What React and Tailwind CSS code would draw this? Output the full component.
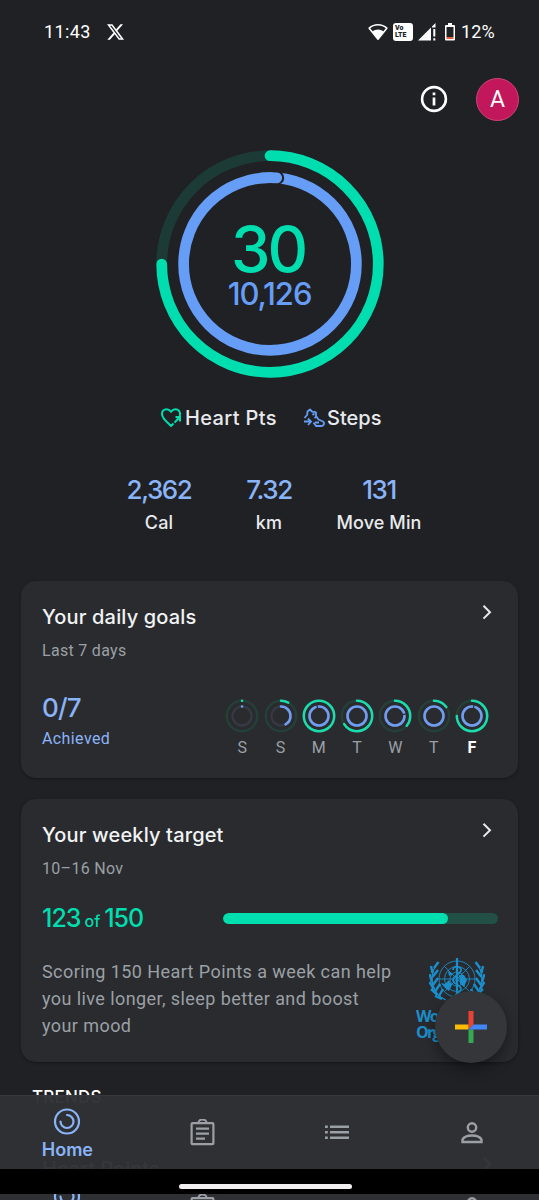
import { FaXTwitter } from "react-icons/fa6";

const days = [
  { label: "S", heart: 0.001, steps: 0.001 },
  { label: "S", heart: 0.08, steps: 0.42 },
  { label: "M", heart: 1, steps: 1, over: 0.97 },
  { label: "T", heart: 0.66, steps: 1 },
  { label: "W", heart: 0.36, steps: 1, over: 0.22 },
  { label: "T", heart: 0.15, steps: 1 },
  { label: "F", heart: 0.75, steps: 1, over: 0.03, today: true },
];

const stats = [
  { value: "2,362", label: "Cal" },
  { value: "7.32", label: "km" },
  { value: "131", label: "Move Min" },
];

function Arc({ c, r, width, value, color }) {
  return (
    <circle
      cx={c}
      cy={c}
      r={r}
      fill="none"
      stroke={color}
      strokeWidth={width}
      strokeLinecap={value < 1 ? "round" : "butt"}
      pathLength="100"
      strokeDasharray={value < 1 ? `${value * 100} 200` : undefined}
      transform={`rotate(-90 ${c} ${c})`}
    />
  );
}

function StatusBar() {
  return (
    <div className="flex h-[63px] items-center pl-11 pr-[44px] text-[18px] text-white">
      <span className="w-[62px] tracking-[0.4px]">11:43</span>
      <FaXTwitter className="h-5 w-[19px]" />
      <div className="ml-auto flex items-center">
        <svg className="h-[18px] w-5" viewBox="0 0 20 18">
          <path d="M1.2 5.2C6 .6 14 .6 18.8 5.2L10 16.2Z" fill="none" stroke="white" strokeWidth="1.6" strokeLinejoin="round" />
          <path d="M4.300 8.600C7.500 5.900 12.500 5.900 15.700 8.600L10 16Z" fill="white" />
        </svg>
        <div className="ml-[5px] flex h-[18px] w-[20px] flex-col justify-center rounded-[3px] bg-white pl-[2px] text-[7px] font-black leading-[7px] text-[#202124]">
          <span>Vo</span>
          <span>LTE</span>
        </div>
        <svg className="ml-[5px] h-[18px] w-[19px]" viewBox="0 0 19 18">
          <path d="M0 17.5L13 4.500V17.500Z M14 3.500L17.500 0V4.500H14Z" fill="white" />
          <path d="M16.300 6V13.500M16.300 15.300V17.500" stroke="white" strokeWidth="2" />
        </svg>
        <svg className="ml-[8px] h-[18px] w-[10px]" viewBox="0 0 10 18">
          <path d="M3 0H7V2H9Q10 2 10 3V16.500Q10 17.500 9 17.500H1Q0 17.500 0 16.500V3Q0 2 1 2H3Z" fill="white" />
          <path d="M1.500 4H8.500V14H1.500Z" fill="#202124" />
          <path d="M1.500 14H8.500V16H1.500Z" fill="#e2603c" />
        </svg>
        <span className="ml-[6px] tracking-[0.2px]">12%</span>
      </div>
    </div>
  );
}

function TopActions() {
  return (
    <div className="mt-px flex h-[70px] items-center justify-end gap-7 pr-5">
      <svg className="h-7 w-7" viewBox="0 0 28 28">
        <circle cx="14" cy="14" r="11.900" fill="none" stroke="white" strokeWidth="2.600" />
        <path d="M14 12.500V20.500M14 7.500V10.200" stroke="white" strokeWidth="2.700" />
      </svg>
      <div className="flex h-[43px] w-[43px] items-center justify-center rounded-full border border-[#d0417a] bg-[#c2185b] pt-0.5 text-[23px] text-white">
        A
      </div>
    </div>
  );
}

function GoalRings() {
  return (
    <div className="relative mx-auto mt-4 h-[228px] w-[228px]">
      <svg className="h-[228px] w-[228px]" viewBox="0 0 228 228">
        <circle cx="114" cy="114" r="108.300" fill="none" stroke="#1c3b37" strokeWidth="10.700" />
        <Arc c={114} r={108.3} width={10.7} value={0.75} color="#00deb0" />
        <Arc c={114} r={86.4} width={10.7} value={1} color="#669df6" />
        <circle cx="121.200" cy="27.900" r="7" fill="#202124" />
        <path d="M106 27.970A86.400 86.400 0 0 1 120.800 27.870" fill="none" stroke="#669df6" strokeWidth="10.700" strokeLinecap="round" />
      </svg>
      <div className="absolute inset-0 flex flex-col items-center pt-[67px]">
        <div className="mr-[3px] text-[63px] font-medium leading-[64px] tracking-[-3px] text-[#00deb0]">30</div>
        <div className="text-[31px] font-medium leading-[26px] tracking-[-1.1px] text-[#669df6]">10,126</div>
      </div>
    </div>
  );
}

function Legend() {
  return (
    <div className="mt-[26px] flex h-7 items-center pl-[161px] text-[20px] font-medium text-[#e8eaed]">
      <svg className="h-5 w-[21px]" viewBox="0 0 21 20" fill="none" stroke="#00deb0" strokeWidth="2">
        <path d="M18.800 8C20 3.500 17 1.200 14.500 1.200C12.500 1.200 11 2.300 10 3.800C9 2.300 7.500 1.200 5.500 1.200C3 1.200 1 3.200 1 6C1 10.500 5.500 13.500 10 18L12.500 15.500" strokeLinejoin="round" />
        <path d="M13.500 14.500L19 9M14.500 9H19V13.500" />
      </svg>
      <span className="ml-[3px] w-[118px] tracking-[0.35px]">Heart Pts</span>
      <svg className="h-5 w-[22px]" viewBox="0 0 22 20" fill="none" stroke="#669df6" strokeWidth="1.800">
        <path d="M1.500 10L4 7C5 5.500 3.500 4.500 5 3L7 1.500L9 3.500C10.500 4.500 12 3 13 4.500V8L15.500 11.500L20 13.500C22 15 21 18 18.500 18H13L10.500 14.500" strokeLinejoin="round" />
        <path d="M1 13.500H7.500M5 10.500L8 13.500L5 17M9.500 7L11.500 5.500M11.500 10L13.500 8.500M12 14.500L16 14.500" />
      </svg>
      <span className="ml-[2px]">Steps</span>
    </div>
  );
}

function Stats() {
  return (
    <div className="ml-[104px] mt-[42px] grid w-[330px] grid-cols-3 text-center">
      {stats.map(s => (
        <div key={s.label}>
          <div className="text-[26px] font-medium leading-8 tracking-[-1.4px] text-[#8ab4f8]">{s.value}</div>
          <div className="mt-[3px] text-[18px] font-medium leading-7 tracking-[0.1px] text-[#e8eaed]">{s.label}</div>
        </div>
      ))}
    </div>
  );
}

function Chevron() {
  return (
    <svg className="mt-px h-4 w-[10px]" viewBox="0 0 10 16" fill="none" stroke="#e8eaed" strokeWidth="2">
      <path d="M1.500 1.800L8 8.200L1.500 14.600" />
    </svg>
  );
}

function Card({ title, subtitle, className, children }) {
  return (
    <section className={`mx-[21px] rounded-[15px] bg-[#2a2b2e] pl-[21px] shadow-[0_1px_3px_rgba(0,0,0,0.35)] ${className}`}>
      <div className="flex justify-between pr-[26px] pt-[22px]">
        <h2 className="text-[20px] font-medium leading-7 tracking-[0.15px] text-[#f1f3f4]">{title}</h2>
        <Chevron />
      </div>
      <p className="mt-2 font-[Roboto] text-[16px] leading-6 tracking-[0.3px] text-[#9aa0a6]">{subtitle}</p>
      {children}
    </section>
  );
}

function DayRings({ heart, steps, over }) {
  return (
    <svg className="h-[34px] w-[34px]" viewBox="0 0 34 34">
      <circle cx="17" cy="17" r="15.200" fill="none" stroke="#244039" strokeWidth="2.400" />
      <circle cx="17" cy="17" r="9.500" fill="none" stroke="#353944" strokeWidth="2.400" />
      <Arc c={17} r={15.2} width={2.5} value={heart} color="#1cdcae" />
      <Arc c={17} r={9.5} width={2.6} value={steps} color="#719df0" />
      {over && (
        <path d="M17 5.800V9.200" stroke="#2a2b2e" strokeWidth="1.200" transform={`rotate(${over * 360} 17 17)`} />
      )}
    </svg>
  );
}

function DailyGoals() {
  return (
    <Card title="Your daily goals" subtitle="Last 7 days" className="mt-[44px] h-[197px]">
      <div className="mt-[29px] flex justify-between pr-[29px]">
        <div>
          <div className="text-[26px] font-medium leading-8 tracking-[-0.8px] text-[#8ab4f8]">0/7</div>
          <div className="mt-[3px] font-[Roboto] text-[16px] leading-6 tracking-[0.4px] text-[#8ab4f8]">Achieved</div>
        </div>
        <div className="flex gap-[4.300px] pt-[7px]">
          {days.map((d, i) => (
            <div key={i} className="flex flex-col items-center">
              <DayRings {...d} />
              <span className={`mt-[3px] font-[Roboto] text-[16px] leading-6 ${d.today ? "font-bold text-white" : "text-[#9aa0a6]"}`}>
                {d.label}
              </span>
            </div>
          ))}
        </div>
      </div>
    </Card>
  );
}

function WhoLogo() {
  return (
    <div className="w-[84px] text-[#1b8fcb]">
      <svg className="ml-[13px] h-[48px] w-[56px]" viewBox="0 0 56 48" fill="none" stroke="currentColor">
        <g strokeWidth="0.900">
          <circle cx="28" cy="22" r="18" />
          <circle cx="28" cy="22" r="12.500" />
          <circle cx="28" cy="22" r="7" />
          <path d="M10 22H46M15.500 9.500L40.500 34.500M40.500 9.500L15.500 34.500" />
        </g>
        <path d="M28 1V46" strokeWidth="2.200" />
        <path d="M24 13C24 8 32 9 32 13C32 18 24 18 24 23C24 28 32 27 32 32C32 36 26 36 26 40" strokeWidth="1.700" />
        <path d="M12 26L16 27L20 23L23 28L20 34L16 31ZM30 18L35 18L38 23L35 30L31 27ZM19 14L24 17L20 19Z" fill="currentColor" stroke="none" />
        {[0, 1].map(side => (
          <g key={side} transform={side ? "translate(56 0) scale(-1 1)" : undefined}>
            <path d="M7 8C0 20 2 37 17 43" strokeWidth="1.300" />
            <path
              d="M5 11L9.500 5M3.500 16L2 9M3.500 20L9 13M3 25L0.500 17M4 28L9 21M5 32L0.500 25M6.500 34L11 27M8.500 38L2 32M10 39L14 32M13 42L6 39"
              strokeWidth="2.400"
            />
          </g>
        ))}
      </svg>
      <div className="mt-[3px] font-['Liberation_Sans_Narrow','Open_Sans',sans-serif] text-[16px] font-bold leading-4 tracking-[-1.700px]">
        <div className="whitespace-nowrap">World Health</div>
        <div>Organization</div>
      </div>
    </div>
  );
}

function WeeklyTarget() {
  return (
    <Card title="Your weekly target" subtitle="10–16 Nov" className="mt-[21px] h-[263px]">
      <div className="mt-[21px] flex h-8 items-center justify-between pr-5">
        <div className="pt-px text-[25px] font-medium tracking-[-1px] text-[#00deb0]">
          123<span className="mx-1 text-[16px] tracking-normal">of</span>150
        </div>
        <div className="h-[11px] w-[275px] overflow-hidden rounded-full bg-[#225046]">
          <div className="h-full w-[225px] rounded-full bg-[#00deb0]" />
        </div>
      </div>
      <div className="flex">
        <p className="mt-6 w-[374px] shrink-0 font-[Roboto] text-[18px] leading-[27px] tracking-[0.42px] text-[#9aa0a6]">
          Scoring 150 Heart Points a week can help
          <br />
          you live longer, sleep better and boost
          <br />
          your mood
        </p>
        <div className="mt-[23px]">
          <WhoLogo />
        </div>
      </div>
    </Card>
  );
}

function AddButton() {
  return (
    <button className="absolute left-[435px] top-[991px] flex h-[72px] w-[72px] items-center justify-center rounded-full bg-[#35363a] shadow-[0_6px_14px_rgba(0,0,0,0.4)]">
      <svg className="h-8 w-8" viewBox="0 0 32 32">
        <path d="M13.500 0H18.500V13.500L13.500 18.500Z" fill="#ea4335" />
        <path d="M0 13.500H13.500V18.500H0Z" fill="#fbbc04" />
        <path d="M13.500 18.500H18.500V32H13.500Z" fill="#34a853" />
        <path d="M18.500 13.500H32V18.500H13.500Z" fill="#4285f4" />
      </svg>
    </button>
  );
}

function BottomNav() {
  return (
    <nav className="grid h-[74px] grid-cols-4 border-t border-[#38393c] bg-[#303134]/97 text-[#9aa0a6]">
      <div className="flex flex-col items-center pt-3 text-[#8ab4f8]">
        <svg className="h-7 w-7" viewBox="0 0 28 28" fill="none" stroke="currentColor" strokeWidth="2.200">
          <circle cx="14" cy="13.500" r="12" />
          <path d="M14 7A6.500 6.500 0 1 1 7.500 13.500" strokeLinecap="round" />
        </svg>
        <span className="mt-[2px] text-[18px] font-semibold leading-6">Home</span>
      </div>
      <div className="flex justify-center pt-[23px]">
        <svg className="h-[27px] w-[25px]" viewBox="0 0 25 27" fill="none" stroke="currentColor" strokeWidth="2.200">
          <rect x="1.600" y="4.200" width="21.800" height="21" rx="1" />
          <path d="M8.500 4A4 3.500 0 0 1 16.500 4" />
          <path d="M6 9.700H19M6 14.700H19M6 19.700H15" />
        </svg>
      </div>
      <div className="flex justify-center pt-[29px]">
        <svg className="h-[15px] w-[24px]" viewBox="0 0 24 15" stroke="currentColor" strokeWidth="2.400">
          <path d="M0 1.800H2.800M5 1.800H24M0 7.300H2.800M5 7.300H24M0 12.800H2.800M5 12.800H24" />
        </svg>
      </div>
      <div className="flex justify-center pt-[26px]">
        <svg className="h-[22px] w-[22px]" viewBox="0 0 22 22" fill="none" stroke="currentColor" strokeWidth="2.400">
          <circle cx="11" cy="5.500" r="4.200" />
          <path d="M1.500 20V17.500C3 14.800 7 13.500 11 13.500S19 14.800 20.500 17.500V20Z" />
        </svg>
      </div>
    </nav>
  );
}

export default function App() {
  return (
    <div className="relative flex h-[1200px] w-[539px] flex-col overflow-hidden bg-[#202124] font-[Inter,sans-serif]">
      <div className="font-[Roboto,sans-serif]">
        <StatusBar />
        <TopActions />
      </div>
      <main className="flex flex-col">
        <GoalRings />
        <Legend />
        <Stats />
        <DailyGoals />
        <WeeklyTarget />
        <h3 className="ml-8 mt-[23px] text-[17px] font-medium leading-6 tracking-[0.2px] text-white">TRENDS</h3>
        <div className="ml-[42px] mt-[46px] flex justify-between pr-[47px] text-[20px] font-medium leading-7 text-[#f1f3f4]">
          Heart Points
          <Chevron />
        </div>
      </main>
      <AddButton />
      <div className="absolute inset-x-0 top-[1095px]">
        <BottomNav />
        <div className="h-[25px] bg-black pl-[179px] pt-[15px]">
          <div className="h-[5px] w-[173px] rounded-full bg-[#f1eff0]" />
        </div>
        <div className="h-[6px] overflow-hidden bg-[#303134]">
          <div className="-mt-[24px]">
            <BottomNav />
          </div>
        </div>
      </div>
    </div>
  );
}
